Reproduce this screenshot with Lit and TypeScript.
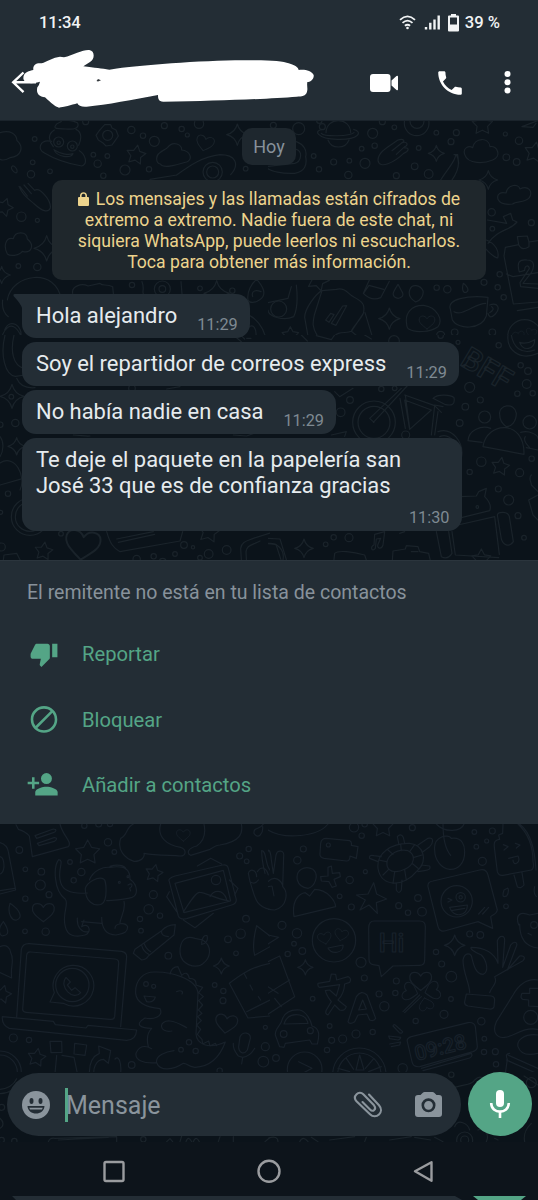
import { LitElement, html, css, svg } from "lit";
import { customElement } from "lit/decorators.js";

type Pt = [number, number, number];

interface Patch {
  x: number;
  y: number;
  h: number;
  dim?: boolean;
  dots: Pt[];
  stars?: [number, number, number, number][];
  sparks?: Pt[];
  hearts?: [number, number, number, number][];
  lines: string;
  words?: { t: string; x: number; y: number; s: number; r: number }[];
}

const starPath = (cx: number, cy: number, r: number, rot: number) => {
  let d = "";
  for (let i = 0; i < 10; i++) {
    const a = ((rot - 90 + i * 36) * Math.PI) / 180;
    const q = i % 2 ? r * 0.52 : r;
    d += `${i ? "L" : "M"}${(cx + q * Math.cos(a)).toFixed(1)} ${(cy + q * Math.sin(a)).toFixed(1)}`;
  }
  return d + "Z";
};

const sparkPath = (x: number, y: number, r: number) => {
  const k = r * 0.2;
  return `M${x} ${y - r}Q${x + k} ${y - k} ${x + r} ${y}Q${x + k} ${y + k} ${x} ${y + r}Q${x - k} ${y + k} ${x - r} ${y}Q${x - k} ${y - k} ${x} ${y - r}Z`;
};

const HEART = "M0 28C-20 12-34 2-31-13C-28-27-8-28 0-13C8-28 28-27 31-13C34 2 20 12 0 28Z";

// Wallpaper doodles, grouped by region; each region is drawn at 3 units per pixel.
const PATCHES: Patch[] = [
  {
    x: 0, y: 120, h: 215,
    dots: [[257, 5, 9], [394, 30, 11], [429, 47, 8], [463, 64, 15], [493, 17, 9], [545, 27, 8], [562, 45, 6], [597, 11, 14], [104, 57, 7], [280, 104, 7], [322, 108, 7], [293, 131, 11], [375, 150, 15], [447, 148, 8], [98, 127, 7], [150, 154, 7], [93, 163, 11], [310, 167, 8], [64, 290, 14], [112, 301, 6], [55, 438, 7], [112, 441, 11], [737, 146, 7], [638, 156, 29], [638, 156, 18], [396, 495, 8], [487, 507, 24], [487, 507, 10], [600, 505, 7], [697, 512, 8], [323, 46, 15], [176, 66, 15], [217, 78, 15], [176, 68, 5], [217, 80, 5]],
    stars: [[408, 105, 30, 10], [12, 262, 28, 20]],
    sparks: [[712, 44, 32], [140, 385, 38], [5, 465, 26], [650, 520, 38]],
    hearts: [[615, 69, 0.85, 14]],
    lines: "M0 38C30 28 50 42 51 62C72 80 65 110 30 113C18 120 8 122 0 118M183 5C183-4 218 0 232 8C240 22 225 30 198 27C180 26 160 28 166 17C170 8 180 8 183 5M163 30C140 44 148 65 160 80M228 28C247 36 244 60 236 76M155 64C118 56 112 90 132 98C165 118 200 130 245 138C265 132 256 103 238 92M162 89C180 101 204 106 219 101C212 115 170 112 162 89M314 14L332 14L336 24L348 30L355 48L346 61L336 75L318 78L308 68L295 60L288 46L297 33L304 25ZM470 117C468 94 500 90 503 82C520 60 546 75 545 90C570 92 580 117 560 126C540 130 492 150 481 132Q470 130 470 117M530 165L450 178M530 165C565 140 605 110 660 104C707 104 720 132 692 164M60 200L82 228M72 195L94 221M84 190L104 211M104 211C120 200 154 242 151 264C144 280 126 273 103 252C80 232 68 225 57 199M36 139C43 132 58 155 48 159C39 156 31 145 36 139M22 402C10 380 16 350 40 356C45 334 80 332 82 357C105 376 94 402 67 394C56 408 30 409 22 402M22 540C35 460 170 440 184 540M14 630C30 590 70 620 62 650M5 650C30 592 55 625 68 660M218 520C214 500 244 488 264 498L300 490C307 500 320 490 338 500L340 520M426 485C434 505 426 515 430 522M543 485L546 522M744 540C740 515 755 490 770 478C790 500 802 525 779 539C764 550 748 550 744 540M758 530C752 510 770 510 783 515M732 580C770 590 790 625 796 650M745 622C760 610 770 625 768 650M8 540C5 565 12 580 25 590",
  },
  {
    x: 268, y: 120, h: 215,
    dots: [[16, 16, 9], [92, 26, 18], [163, 20, 9], [154, 2, 8], [314, 40, 15], [343, 5, 9], [379, 22, 7], [320, 77, 8], [281, 86, 7], [137, 108, 7], [197, 126, 9], [244, 122, 7], [291, 130, 15], [153, 148, 8], [241, 165, 11], [385, 167, 9], [440, 139, 10], [482, 162, 13], [452, 84, 7], [505, 38, 7], [565, 38, 9], [549, 65, 9], [446, 10, 37], [447, 4, 21], [753, 62, 11], [712, 42, 6], [715, 112, 10], [746, 126, 10], [671, 277, 11], [790, 308, 9], [673, 326, 7], [648, 487, 9], [695, 463, 8], [689, 502, 8], [707, 532, 8], [506, 503, 8], [538, 508, 11], [518, 646, 12], [560, 637, 10], [673, 637, 10], [770, 650, 51], [32, 567, 24]],
    stars: [[643, 14, 32, 0], [800, 98, 32, 10], [150, 480, 34, 20], [67, 646, 26, 0]],
    sparks: [[505, 100, 24], [661, 180, 28], [364, 596, 32]],
    hearts: [[477, 606, 0.75, 0], [752, 648, 0.55, -10], [790, 638, 0.5, 10]],
    lines: "M174 38C175-10 247-10 248 38M180 60C190 88 232 88 243 60M165 28C135 30 146 57 208 58C273 60 285 35 257 28M160 40C168 50 245 50 258 38M85 65C106 73 118 90 113 110C118 135 110 155 80 160C40 162 10 153 0 146M85 88C105 95 100 125 80 130L0 139M330 121C330 95 362 80 390 60C408 54 412 65 402 68L372 92M402 68C420 63 421 77 410 80L385 103M410 84C425 82 423 93 407 100C380 126 334 150 330 121M590 103C584 84 602 75 614 83C620 52 662 50 666 80C688 75 702 110 674 120C650 130 600 135 590 103M690 238C685 220 700 215 714 219C720 192 752 190 756 207C780 195 796 213 784 233C770 250 746 242 734 252C710 255 695 250 690 238M518 180C540 145 565 120 563 104M552 180C576 145 574 120 565 104M558 104L569 104L572 130M762 20L810 2M762 20L795 22L804 10M658 300L716 310L706 290L728 280L734 300L747 306C724 334 692 325 660 370M655 360C685 372 694 396 689 414C676 412 663 397 652 385M708 408L712 382L752 374L748 350L778 348L783 366L810 362M752 374C760 390 770 388 783 380L783 366M708 408L736 552L810 546M715 462L735 470L810 458M754 456C745 425 755 418 777 420C801 420 800 440 790 458L765 490L810 492M754 456L770 451C770 435 783 434 784 446L756 488L758 500L810 505M748 572L810 562M110 592C110 565 145 520 162 512L205 508C230 500 244 525 256 530C285 545 292 555 286 580L250 634C235 642 210 630 194 654L150 650C130 620 135 605 139 585L162 512M110 592L122 660M291 578L316 660M286 580C278 600 256 618 250 634L282 660M190 610L224 558L236 557L204 616ZM173 600L188 580L198 584L183 607ZM304 480L286 520Q310 545 338 533L364 484M288 518L303 496L347 508M390 493C376 515 371 524 380 531C392 540 412 530 402 515L390 493M426 508C432 491 456 494 465 512C468 528 456 542 443 546C425 535 421 520 426 508M586 490C580 510 587 522 596 516C606 510 594 495 586 490M416 612C410 580 430 555 467 556C508 562 526 600 510 620C485 638 440 638 424 628Q416 625 416 612M547 567C535 538 600 525 660 532L655 588C640 630 570 630 553 600ZM558 575C585 590 620 550 653 550M665 555C690 546 698 565 682 582Q665 600 660 580M671 560Q682 568 665 578M85 495C90 540 87 570 77 590C45 605 0 588 0 570M70 500L60 535L0 548",
  },
  {
    x: 0, y: 335, h: 226,
    dots: [[34, 185, 7], [46, 264, 11], [1, 269, 8], [24, 476, 8], [2, 532, 6], [183, 596, 7], [525, 657, 7], [552, 630, 10], [579, 637, 5], [600, 668, 7], [626, 657, 13], [680, 645, 13], [461, 664, 8], [410, 672, 11], [488, 680, 10], [4, 636, 12], [90, 545, 56], [90, 545, 44], [396, 160, 10]],
    stars: [[131, 649, 28, 8], [627, 590, 34, 10]],
    sparks: [[36, 184, 36], [50, 334, 26]],
    hearts: [[248, 628, 1.65, 8]],
    lines: "M15 0C0 60 15 120 46 124L75 120M42 0C30 50 40 90 70 100M50 130C60 155 80 160 105 158M0 305C13 320 10 350 0 365M0 384C45 355 80 425 60 465M0 450L70 430M8 690L12 660L50 655L68 690M320 590C330 625 340 640 360 650L540 618L548 590M350 612L460 590M355 622L464 598M725 690L722 640C725 620 740 618 760 610L810 594M740 690L738 650C740 632 752 632 780 618M700 0L724 20M722 0L734 12M740 10L753 10M220 300C240 300 255 305 270 303M500 162L540 155M700 300L740 303L770 292",
  },
  {
    x: 268, y: 335, h: 226,
    dots: [[692, 31, 8], [758, 91, 8], [780, 108, 10], [776, 147, 13], [748, 176, 8], [794, 175, 8], [605, 157, 15], [592, 215, 10], [637, 195, 9], [575, 264, 10], [218, 232, 13], [246, 195, 10], [180, 190, 10], [318, 262, 64], [318, 262, 48], [640, 380, 14], [605, 411, 8], [755, 413, 12], [791, 371, 8], [691, 462, 9], [722, 495, 15], [750, 542, 9], [768, 608, 7], [197, 607, 8], [173, 628, 7], [243, 608, 12], [628, 516, 4], [785, 262, 20], [650, 246, 18], [340, 162, 8], [378, 18, 16], [413, 300, 12], [6, 665, 40], [518, 2, 8], [570, 22, 6], [380, 160, 7]],
    stars: [[697, 395, 28, 10], [640, 672, 30, 0]],
    sparks: [[108, 640, 28]],
    lines: "M316 262L420 150M318 262L305 250L400 160M396 190L412 280M412 180L425 280M410 195L490 225L425 283ZM410 180L500 212L520 232M500 212L490 300M510 230L500 300M495 190C510 175 550 180 558 188C562 210 550 213 530 208ZM500 210L525 215M510 290C550 275 590 320 580 370M515 305C548 290 580 340 570 372M695 238C690 210 740 200 745 235C745 260 730 275 715 275C700 265 695 255 695 238M645 335C655 260 770 250 768 358ZM600 317C602 285 640 270 668 280M600 317L642 322M758 292C785 285 810 300 810 310M775 338L810 345M772 305C765 315 775 328 785 338M575 485L625 483L632 470L655 460L650 485C660 495 672 510 665 527L580 548M570 570L680 545L694 658M552 590L562 660L692 668M688 540C690 530 720 528 724 545L736 620C722 640 705 628 700 612ZM505 590L520 665Q540 675 552 655L542 590M200 655C210 645 255 650 290 660L300 690M196 690L200 655M375 648L412 642L415 632L450 635L455 650L482 655L490 690M375 648L372 690M430 650L450 650M790 420C780 430 790 440 790 450L810 470M782 495L795 540L810 555M782 495L810 480M320 598L350 590L345 630C340 645 325 640 330 628L338 610L325 612L322 640C312 653 305 635 318 630ZM395 595L410 590M720 0C715 40 750 80 810 55M730 0C735 35 760 60 800 45M755 22C775 30 790 20 800 14C800 45 765 50 755 22M0 610L36 612L60 690M0 626L24 628L44 690M290 0L310 12M200 170L215 185L255 160M100 0L118 18M145 2L190 14L200 0M190 300L235 290L230 304",
    words: [{ t: "BFF", x: 572, y: 88, s: 92, r: 31 }],
  },
  {
    x: 0, y: 820, h: 252, dim: true,
    dots: [[253, 17, 8], [296, 12, 9], [330, 12, 8], [58, 90, 10], [324, 67, 11], [343, 96, 7], [210, 126, 7], [76, 148, 7], [124, 155, 10], [244, 156, 11], [221, 181, 8], [121, 195, 15], [147, 224, 9], [76, 236, 8], [75, 334, 7], [137, 335, 11], [460, 224, 12], [446, 268, 14], [420, 297, 8], [480, 287, 8], [423, 332, 7], [505, 407, 10], [746, 87, 8], [719, 108, 9], [740, 124, 7], [738, 296, 10], [722, 341, 14], [684, 358, 10], [708, 400, 7], [644, 495, 7], [670, 513, 8], [669, 542, 9], [796, 680, 12], [790, 725, 16], [395, 735, 10], [40, 654, 12], [87, 660, 8], [659, 752, 8], [543, 689, 7], [567, 667, 8], [587, 693, 8], [438, 492, 7], [461, 499, 6], [648, 180, 14], [217, 495, 50], [0, 757, 64], [0, 757, 52], [796, 622, 6], [358, 187, 3], [384, 170, 3]],
    stars: [[263, 98, 38, 0], [462, 160, 27, 12], [7, 523, 28, 15], [110, 713, 28, 10]],
    sparks: [[664, 438, 24]],
    hearts: [[130, 276, 1.05, 0], [550, 45, 0.65, 0], [679, 610, 1.05, 8]],
    lines: "M48 14L55 28Q78 35 88 48L97 110L205 80C218 65 188 48 180 12M105 47L160 27C172 27 168 36 160 38L110 55ZM112 70L162 53C174 52 170 61 163 64L117 77ZM0 68Q22 75 25 95L47 210L0 222M0 212L44 205M0 110Q12 112 12 140Q10 160 0 162M400 12C375 25 385 45 362 55C350 90 375 115 402 124C425 125 435 110 432 100C470 108 520 105 540 108C560 108 560 88 542 82C500 75 470 50 482 12M612 12C620 50 605 68 590 78C562 85 560 100 572 106L630 88C645 78 655 75 660 75C720 65 730 40 724 12M176 119C160 140 160 210 196 238C208 250 185 282 196 320C202 350 230 352 255 345C275 340 270 305 245 320L252 300M176 119C195 120 170 150 182 188C190 215 225 222 262 219M268 180C280 150 310 140 330 142C378 135 390 150 390 178C414 195 415 225 396 232C370 240 345 240 320 242M256 205C255 242 280 262 305 252C325 240 318 180 312 178C295 165 260 190 256 205M330 139C350 132 375 135 378 148M384 195C400 185 398 200 389 205L392 213M372 244C378 270 362 290 360 308M307 250L305 252M305 292C305 320 315 345 348 345C370 340 382 340 383 320C375 305 345 310 345 325M245 305L304 310M232 294C230 320 245 340 265 335M508 185Q502 175 525 168L668 135Q682 132 685 145L708 235Q712 250 695 255L560 296Q540 300 535 288ZM525 190L670 151L692 243L552 278ZM550 276C570 245 588 215 600 217C620 218 640 235 688 243M630 230C640 210 668 205 680 238M592 138L632 115L665 132M508 215L500 230L530 275M688 180L714 205L704 225M550 300L585 323L640 280M400 400L425 420Q440 418 445 408L522 345L526 314Q500 315 485 332L405 388ZM425 376Q430 395 446 403M432 370Q440 390 452 395M485 332Q482 348 505 350M540 395C540 360 558 345 585 355L608 360C640 380 630 415 610 430C600 440 575 445 550 423Q540 410 540 395M605 370C605 350 615 345 621 347C625 360 618 372 605 373M30 250C20 285 38 303 50 300C70 292 60 270 30 250M10 305C-10 330 0 350 10 347C32 345 22 322 10 305M0 380C20 370 30 385 32 398C45 420 30 440 35 474L0 458M50 590L64 388Q68 370 88 371L365 394Q380 397 380 410L362 620M68 568L80 405Q82 395 92 396L345 417Q357 418 356 430L344 590Q342 600 330 598L78 577Q68 576 68 568M7 590L160 604L166 614L258 624L264 616L410 630Q408 660 380 661L28 625Q5 615 7 590ZM163 518A61 61 0 1 1 190 550L150 546ZM198 472C175 500 220 545 242 518L225 503L215 511L202 495L211 486ZM407 520C405 480 430 455 465 456C510 455 590 475 594 520L588 642C590 672 625 690 676 666C660 710 630 740 585 742C560 740 565 730 550 730C520 750 480 755 470 728C430 732 405 720 408 700C420 670 445 680 455 686M407 520C410 550 440 562 480 566C492 590 460 600 435 594C400 615 425 625 455 625C440 640 440 660 445 680M432 528L466 531Q460 550 440 545ZM510 462Q515 440 534 440L545 466Q562 450 568 475Q590 475 588 495L608 502L596 518L610 530L596 542L608 555L595 570L606 580L593 590L604 602L590 615L602 628L592 643L606 658L608 672L626 663L630 678L646 670L650 677M530 515C545 508 550 516 546 522M516 633C475 640 475 600 510 603C530 605 545 615 560 623M470 728C465 705 500 695 522 692M790 12C780 30 760 20 762 40C775 60 790 40 788 20M810 150C795 135 800 90 785 92C785 120 792 148 795 160M745 160C748 145 770 148 770 170M745 160L750 185Q765 195 775 180M772 155C785 135 800 145 805 165M750 185C765 230 765 260 810 268M770 317Q755 375 764 406L810 380M770 317L810 348M688 490C720 465 755 440 810 430M688 490L744 594L810 588M740 575L810 540M732 460L740 475M750 495L758 510M775 530L782 540M720 650C730 632 752 638 751 655L742 690C730 708 715 695 716 680ZM700 670C698 690 710 700 715 708L728 712C750 710 758 695 764 685M728 712L725 732M150 664L185 664L186 697L153 698ZM224 670L260 675L255 706L222 702ZM186 706L222 712L232 760M170 706L165 760M296 678L332 692L325 730L310 718C285 720 280 750 282 760M296 678L298 700C270 712 268 740 268 760M345 717C355 705 365 725 362 760",
  },
  {
    x: 268, y: 820, h: 252, dim: true,
    dots: [[258, 22, 14], [281, 47, 8], [290, 13, 8], [433, 23, 9], [106, 87, 9], [88, 121, 11], [292, 155, 6], [245, 180, 11], [215, 229, 7], [250, 261, 9], [42, 316, 12], [87, 340, 14], [78, 371, 7], [103, 393, 10], [59, 402, 8], [279, 427, 15], [289, 474, 9], [134, 536, 7], [185, 618, 7], [191, 661, 9], [224, 657, 12], [264, 642, 12], [314, 636, 8], [177, 690, 8], [24, 714, 10], [619, 36, 7], [673, 33, 9], [656, 63, 6], [625, 80, 7], [643, 124, 12], [714, 259, 7], [450, 234, 10], [392, 257, 9], [420, 278, 8], [462, 275, 13], [605, 342, 9], [637, 345, 10], [504, 396, 8], [521, 432, 9], [550, 470, 16], [385, 483, 9], [382, 519, 8], [333, 522, 9], [349, 559, 14], [549, 537, 7], [528, 583, 12], [443, 603, 8], [640, 604, 11], [649, 656, 7], [648, 696, 8], [682, 695, 9], [684, 733, 8], [404, 745, 14], [198, 361, 65], [566, 244, 47], [578, 232, 14], [578, 232, 5], [788, 592, 21], [47, 642, 10], [127, 632, 9], [110, 748, 52], [274, 764, 80], [274, 764, 65], [181, 75, 6], [798, 315, 10]],
    stars: [[345, 20, 34, 0]],
    sparks: [[112, 442, 23], [560, 376, 31]],
    hearts: [[170, 354, 0.65, -12], [220, 344, 0.65, 12], [458, 482, 1.05, 0], [494, 512, 0.85, 75], [426, 515, 0.85, -75], [474, 553, 0.7, 165]],
    lines: "M0 30C50 60 150 50 180 12M158 70Q160 55 175 55L245 62Q252 65 250 76L270 80L265 115L246 108Q246 124 235 123L168 115Q154 112 156 100ZM16 160L10 120C8 90 0 85 0 95M16 160L24 105C28 88 50 90 47 108L44 200C60 215 60 260 20 270L0 268M0 185C20 165 40 180 45 200M0 200L12 198L18 228M88 180C82 150 110 135 135 148C155 165 140 200 120 205C105 203 92 195 88 180M78 290C70 240 95 220 112 218L125 228L140 208C180 208 202 245 203 260ZM180 142L190 138L193 160L215 158L217 170L198 178L205 198L192 202L183 185L160 183L158 170L180 168ZM317 188L326 222L356 237L325 248L328 280L303 255L276 270L292 240L265 225L300 222ZM330 145C325 100 370 68 425 70C470 75 480 125 445 155C410 200 340 205 330 145M358 140C350 110 385 85 420 92C445 105 440 135 410 148C390 158 365 158 358 140M332 120L355 125M345 165L362 148M375 190L380 155M415 180L410 150M450 145L432 130M462 105L438 112M440 74L425 95M398 72L400 92M360 90L375 103M392 70L388 50Q398 38 406 52L410 70M450 75L480 55C500 50 495 70 485 80L465 95M460 135L485 138Q490 150 470 152L450 155M402 180L400 210Q393 225 385 210L385 190M330 125L305 115Q302 103 318 107L340 110M500 90C495 50 540 40 550 55C585 50 590 80 590 95C590 130 570 150 545 148C520 145 500 120 500 90M548 106C530 85 525 40 525 12M505 12C530 40 580 35 588 12M705 12L704 40L692 45L695 58C675 60 678 75 680 90L688 155Q692 168 705 166L790 150Q800 145 795 125C795 80 780 40 750 12M755 12C790 40 800 90 804 150M706 74L720 80L708 90M742 70L756 75L745 84M722 115L750 108C760 130 735 140 735 120M738 165L748 200Q758 208 768 195L762 158M480 200Q478 185 495 183L635 150Q655 145 660 165L688 270C685 285 670 285 668 290L674 325L630 305L540 330Q515 340 510 320ZM540 235L552 240L540 246M545 262L598 255C600 290 555 295 545 262M550 272L590 265M632 282L650 262M644 282L662 262M708 210C700 235 710 230 716 228C725 215 720 200 718 205ZM752 315C740 280 760 275 785 285L810 280M755 312C755 350 770 380 810 384M780 340L790 345M800 200Q795 220 805 230M302 325Q302 302 320 303L455 303Q472 303 472 320L470 420Q470 436 455 436L375 438L340 470L333 437L315 434Q303 432 303 418ZM180 384L225 375C228 400 190 405 180 384M0 345L32 352L0 372M0 425L35 408L80 530L0 583M0 520L65 480M20 535L40 560M0 500L30 520M150 490L185 484L190 462L203 463L206 480L240 470Q252 475 245 487L230 492C228 520 215 535 210 540L235 560Q230 575 215 570L200 555L180 585Q170 582 175 570L190 545C178 530 175 525 172 512L185 510L205 528L215 494L155 502Q148 500 150 490M240 605L265 530Q280 508 297 525L323 595Q318 605 305 600L297 582L270 585L260 605Q245 615 240 605M272 570L284 540L295 567ZM455 525L405 575M460 530L410 578M585 420C590 395 610 398 612 415C618 440 625 462 645 463C665 455 655 420 640 405C615 395 605 385 610 382C650 382 680 400 690 430L688 362C695 345 710 345 710 360L704 442L728 375C740 360 752 368 744 382L718 450L755 408C770 405 772 415 765 422L680 470C690 490 670 500 665 518M585 420C585 460 605 490 605 518M595 522L670 528Q680 530 680 540L678 560Q675 568 665 567L600 558Q588 555 590 545ZM810 480C780 475 755 490 735 525L685 605C670 640 690 655 710 652C740 650 760 620 810 628M810 505L785 505L785 520L762 520Q755 535 765 538L782 540L782 558L810 560M810 645C770 640 745 660 750 680C760 710 790 705 810 700M720 705L810 745M715 720L810 762M725 700Q710 700 718 718L712 760M22 645C20 625 40 615 42 600C50 575 70 568 95 570C115 575 128 600 132 618C155 625 155 645 148 672L132 672L125 660L52 670L48 682L35 680ZM48 612C55 588 75 582 95 585C110 588 118 600 120 610ZM92 725L132 745L100 762M375 618Q378 610 385 618L404 635Q402 642 394 638ZM362 648L398 652Q398 658 390 660L365 656ZM365 672L398 666L395 675L370 680M418 665Q415 655 430 650L600 608Q618 605 622 620L628 680Q628 690 615 695L455 740Q435 742 432 725ZM460 745L610 700Q615 708 605 714L465 752M275 705L288 750L264 750ZM235 715L257 748M318 715L292 745M210 745L245 755M340 740L302 755",
    words: [
      { t: "Hi", x: 332, y: 395, s: 80, r: 0 },
      { t: "09:28", x: 446, y: 722, s: 62, r: -14 },
    ],
  },
  {
    x: 0, y: 1060, h: 82,
    dots: [[5, 142, 9], [5, 240, 8], [430, 238, 8], [43, 243, 8]],
    lines: "M0 175C12 185 12 198 0 205M0 101Q45 98 62 62M0 88Q36 84 50 56M145 245Q150 232 165 235L350 230L350 245M175 240L325 232M500 245L510 236L518 245M540 245L545 228M558 245Q565 225 575 245M580 245Q588 225 598 245M655 245L660 230M700 245L700 230M795 245L810 232",
  },
  {
    x: 268, y: 1060, h: 82,
    dots: [[590, 240, 24], [590, 240, 12], [790, 68, 15], [550, 44, 8]],
    lines: "M0 235Q30 225 30 245M95 245Q105 225 120 245M130 232L150 245M185 240L260 230M290 245L295 232M365 240L430 230M440 232L488 240M500 232L525 245M545 90C575 70 610 80 620 60C640 40 655 60 650 80M560 200C570 175 600 190 605 210M630 210C650 200 665 225 655 245M680 235L690 240M770 245C765 220 775 205 790 190M768 48L810 75",
  },
];

@customElement("chat-wallpaper")
class ChatWallpaper extends LitElement {
  static styles = css`
    :host { display: block; }
    .sheet { display: block; width: 538px; height: 1200px; }
    .ink { fill: none; stroke: #1a232a; stroke-width: 3.6; stroke-linejoin: round; stroke-linecap: round; }
    .dim { stroke: #18212a; }
    .word { font-family: Roboto, sans-serif; font-weight: 500; }
  `;
  render() {
    return html`<svg class="sheet" viewBox="0 0 538 1200" aria-hidden="true">
      ${PATCHES.map(
        (p) => svg`<svg x=${p.x} y=${p.y} width="270" height=${p.h} viewBox="0 0 810 ${p.h * 3}">
          <g class="ink ${p.dim ? "dim" : ""}">
            <path d=${p.lines} />
            ${p.dots.map(([x, y, r]) => svg`<circle cx=${x} cy=${y} r=${r} />`)}
            ${(p.stars ?? []).map(([x, y, r, a]) => svg`<path d=${starPath(x, y, r, a)} />`)}
            ${(p.sparks ?? []).map(([x, y, r]) => svg`<path d=${sparkPath(x, y, r)} />`)}
            ${(p.hearts ?? []).map(([x, y, k, a]) => svg`<path d=${HEART} transform="translate(${x} ${y}) rotate(${a}) scale(${k})" />`)}
            ${(p.words ?? []).map((w) => svg`<text class="word" font-size=${w.s} transform="translate(${w.x} ${w.y}) rotate(${w.r})">${w.t}</text>`)}
          </g>
        </svg>`,
      )}
    </svg>`;
  }
}

const MESSAGES = [
  { text: "Hola alejandro", time: "11:29", first: true },
  { text: "Soy el repartidor de correos express", time: "11:29" },
  { text: "No había nadie en casa", time: "11:29" },
  { text: "Te deje el paquete en la papelería san José 33 que es de confianza gracias", time: "11:30", tall: true },
];

const ACTIONS = [
  {
    label: "Reportar",
    icon: svg`<path d="M19 3.2v11.600h4.500V3.200zM15 3.200H6c-.83 0-1.540.5-1.840 1.220L.64 11.500c-.09.23-.14.47-.14.73v1.900c0 1.100.9 2 2 2h6.800l-.95 4.600-.03.3c0 .4.17.8.44 1.060L9.800 23.200l6.600-6.600c.37-.36.6-.86.6-1.400V5.200c0-1.100-.9-2-2-2z"/>`,
  },
  {
    label: "Bloquear",
    icon: svg`<path d="M12 .1C5.700.1.600 5.200.600 11.500S5.700 22.900 12 22.900 23.400 17.800 23.400 11.500 18.300.1 12 .1zM2.800 11.500c0-5.100 4.100-9.200 9.200-9.200 2.100 0 4.100.7 5.700 1.950L4.750 17.200A9.100 9.100 0 0 1 2.800 11.500zM12 20.700c-2.100 0-4.100-.7-5.700-1.950L19.250 5.800A9.100 9.100 0 0 1 21.200 11.500c0 5.100-4.100 9.200-9.200 9.200z"/>`,
  },
  {
    label: "Añadir a contactos",
    icon: svg`<path d="M14.100 11.200a4.700 4.700 0 1 0 0-9.400 4.700 4.700 0 0 0 0 9.400zM3.900 9.200V5.300H1.700V9.200H-2v2.200h3.700v3.900h2.200v-3.900h3.900V9.200zM14.100 13.400c-3.200 0-9.600 1.600-9.600 4.700v2.900H23.700v-2.900c0-3.100-6.400-4.700-9.600-4.700z"/>`,
  },
];

@customElement("app-root")
class AppRoot extends LitElement {
  static styles = css`
    :host {
      display: block; position: relative; width: 538px; height: 1200px; overflow: hidden;
      background: #0b131a; color: #e6ebee; font-family: Roboto, sans-serif;
    }
    * { box-sizing: border-box; }
    svg { display: block; overflow: visible; flex: none; }
    .wall { position: absolute; left: 0; top: 0; }
    .screen { position: relative; height: 1200px; display: flex; flex-direction: column; }
    header { height: 121px; background: #232d35; flex: none; border-bottom: 1px solid #1a232b; }
    .status { height: 45px; display: flex; align-items: center; padding: 0 38px 0 39px; font-size: 16.6px; font-weight: 500; color: #f1f3f4; }
    .status .clock { margin-right: auto; letter-spacing: -.1px; }
    .status .icons { display: flex; margin-right: 4px; }
    .bar { height: 75px; display: flex; align-items: center; fill: #fff; }
    .title { width: 370px; height: 75px; }
    .buttons { width: 168px; height: 75px; }
    main { height: 439px; flex: none; display: flex; flex-direction: column; align-items: flex-start; padding: 7px 22px 0; }
    .day { align-self: center; width: 54px; height: 37px; border-radius: 10px; background: #1e272e; color: #87919a; font-size: 18px; line-height: 37px; text-align: center; }
    .notice {
      align-self: center; width: 434px; height: 100px; margin-top: 15px; padding: 9px 0; border-radius: 10px; background: #1f272c;
      color: #edd48d; font-size: 17.600px; line-height: 20.900px; text-align: center;
    }
    .notice div { white-space: nowrap; }
    .notice svg { display: inline-block; width: 11px; height: 14px; margin-right: 7px; vertical-align: -1px; }
    .thread { margin-top: 14px; display: flex; flex-direction: column; align-items: flex-start; gap: 3.900px; }
    .bubble { position: relative; display: flex; align-items: flex-end; height: 44px; padding: 0 12px 0 14px; gap: 20px; border-radius: 14px; background: #232d35; }
    .bubble p { margin: 0; font-size: 21.950px; line-height: 26px; padding-bottom: 9px; white-space: nowrap; }
    .bubble time { font-size: 16.300px; line-height: 20px; color: #7f8a92; padding-bottom: 3px; }
    .bubble.tall { width: 439.500px; height: 93.500px; align-items: stretch; padding-top: 9px; gap: 0; }
    .tall p { width: 372px; white-space: normal; padding: 0; flex: none; }
    .tall time { align-self: flex-end; margin-left: auto; }
    .tail { position: absolute; left: -9px; top: 0; fill: #232d35; }
    .panel { height: 264px; flex: none; background: #232d35; border-top: 1px solid #2b353d; padding: 20px 27px 0; }
    .panel h2 { margin: 0; font-size: 19.520px; line-height: 24px; font-weight: 400; color: #88929b; }
    .action { display: flex; align-items: center; height: 65.700px; font-size: 20.200px; color: #54a586; gap: 24px; }
    .actions { padding-top: 16px; }
    .action svg { width: 28px; height: 28px; margin-left: 3px; fill: #54a586; }
    .gap { height: 248px; flex: none; }
    .composer { height: 70px; flex: none; display: flex; padding: 0 6px 0 7px; gap: 7px; align-items: flex-start; }
    .field { display: flex; align-items: center; width: 454px; height: 63px; margin-top: 1px; border-radius: 32px; background: #232d35; padding: 0 19px 0 15px; }
    .caret { width: 3px; height: 34px; margin-left: 15px; background: #54a586; }
    .hint { font-size: 25px; line-height: 34px; color: #8a949c; margin-left: -2px; margin-right: auto; padding-top: 3px; }
    .clip { margin-right: 33px; }
    .mic { width: 64px; height: 64px; border-radius: 50%; background: #54a586; flex: none; }
    nav { flex: 1; background: #0d141b; overflow: hidden; }
  `;

  render() {
    return html`
      <chat-wallpaper class="wall"></chat-wallpaper>
      <div class="screen">
        <header>
          <div class="status">
            <span class="clock">11:34</span>
            <svg class="icons" width="62" height="18" viewBox="0 0 62 18" fill="none" stroke="#f1f3f4" stroke-width="1.8">
              <path d="M1 5.800Q8.500-1 16 5.800M3.500 8.900Q8.500 4.400 13.500 8.900M5.900 11.800Q8.500 9.600 11.100 11.800"/>
              <circle cx="8.500" cy="14" r="1.300" fill="#f1f3f4" stroke="none"/>
              <path stroke-width="2.400" d="M27 15.500v-2.500M31.300 15.500V8.700M35.500 15.500V5.500M39.700 15.500V1.500"/>
              <path fill="#f1f3f4" stroke="none" fill-rule="evenodd" d="M52 0h5v1.500h2q1 0 1 1v14q0 1-1 1h-9q-1 0-1-1v-14q0-1 1-1h2zM51 3.500v7h7v-7z"/>
            </svg>
            <span>39 %</span>
          </div>
          <div class="bar">
            <svg class="title" viewBox="0 0 370 75">
              <path d="M23.500 27.500L13.200 37.300L23.500 47.200M13.200 37.300H36" fill="none" stroke="#fff" stroke-width="2.400"/>
              <path transform="translate(0 -45) scale(.33333)" d="M70 235C70 215 90 212 100 210C98 195 108 188 125 190C140 185 160 172 180 170L192 172C220 165 250 148 268 150C285 152 285 178 270 186L250 199C285 203 305 206 328 209C420 195 600 182 730 181C800 179 850 183 866 190C885 195 895 203 896 210C910 207 935 210 941 225C943 238 930 246 922 246C920 260 924 265 921 275C918 288 905 289 890 290C800 297 650 303 490 305C475 305 474 295 474 285C400 298 320 315 260 320C245 321 235 318 232 310C215 315 190 322 177 323C165 320 155 310 135 292C115 290 108 278 112 262C118 255 118 250 120 245C105 250 72 255 70 235Z"/>
              <path d="M96.500 36L98 34L101 35.200L98 36.500z" fill="#34393d"/>
            </svg>
            <svg class="buttons" viewBox="370 0 168 75">
              <rect x="370" y="29" width="20.500" height="18" rx="3"/>
              <path d="M391.500 35.500L396.500 31q1.500-1 1.500.8v12.400q0 1.800-1.500.8l-5-4.500z"/>
              <path transform="translate(434.300 22.300) scale(1.310)" d="M4 3C3.450 3 3 3.450 3 4C3 13.390 10.610 21 20 21C20.550 21 21 20.550 21 20V16.500C21 15.950 20.550 15.500 20 15.500C18.750 15.500 17.550 15.300 16.430 14.930C16.080 14.820 15.690 14.900 15.410 15.170L13.210 17.370C10.380 15.930 8.060 13.620 6.620 10.780L8.820 8.570C9.100 8.310 9.180 7.920 9.070 7.570C8.700 6.450 8.500 5.250 8.500 4C8.500 3.450 8.050 3 7.500 3Z"/>
              <circle cx="507.500" cy="29" r="3"/><circle cx="507.500" cy="37.300" r="3"/><circle cx="507.500" cy="45.600" r="3"/>
            </svg>
          </div>
        </header>
        <main>
          <div class="day">Hoy</div>
          <div class="notice">
            <div><svg viewBox="0 0 11 14"><path fill="#edd48d" fill-rule="evenodd" d="M1 5H2V3.500C2-1 9-1 9 3.500V5h1q1 0 1 1v7q0 1-1 1H1q-1 0-1-1V6q0-1 1-1zM3.600 5h3.800V3.500c0-2.400-3.800-2.400-3.800 0z"/></svg>Los mensajes y las llamadas están cifrados de</div>
            <div>extremo a extremo. Nadie fuera de este chat, ni</div>
            <div>siquiera WhatsApp, puede leerlos ni escucharlos.</div>
            <div>Toca para obtener más información.</div>
          </div>
          <div class="thread">
            ${MESSAGES.map(
              (m) => html`<div class="bubble ${m.tall ? "tall" : ""}">
                ${m.first ? html`<svg class="tail" width="24" height="24" viewBox="0 0 24 24"><path d="M1.500 0H24V18H9V14Q8 10 .5 2Q0 0 1.500 0z"/></svg>` : ""}
                <p>${m.text}</p><time>${m.time}</time>
              </div>`,
            )}
          </div>
        </main>
        <section class="panel">
          <h2>El remitente no está en tu lista de contactos</h2>
          <div class="actions">
            ${ACTIONS.map((a) => html`<div class="action"><svg viewBox="0 0 24 24">${a.icon}</svg><span>${a.label}</span></div>`)}
          </div>
        </section>
        <div class="gap"></div>
        <div class="composer">
          <div class="field">
            <svg width="28" height="28" viewBox="0 0 28 28">
              <circle cx="14" cy="14" r="14" fill="#8a949c"/>
              <ellipse cx="9.500" cy="10" rx="2" ry="2.900" fill="#232d35"/><ellipse cx="18.500" cy="10" rx="2" ry="2.900" fill="#232d35"/>
              <path d="M5.500 15H22.500C22 25 6 25 5.500 15z" fill="#232d35"/><path d="M7.300 16.700H20.700L20 18.600H8z" fill="#8a949c"/>
            </svg>
            <div class="caret"></div>
            <div class="hint">Mensaje</div>
            <svg class="clip" width="28" height="28" viewBox="0 0 28 28" fill="none" stroke="#8a949c" stroke-width="2.100" stroke-linecap="round">
              <path d="M15 3.500L25 14.200C31 21 22 29 16 23.200L2.500 10.300C-2 5 5 -1 9.300 3.200L20 14.300C23 18 19 21.500 16 18.500L8.500 11"/>
            </svg>
            <svg width="27" height="26" viewBox="0 0 27 26">
              <path fill="#8a949c" fill-rule="evenodd" d="M9.500 0h8q1 0 1.700.7L21.500 3H24q3 0 3 3v16q0 3-3 3H3q-3 0-3-3V6q0-3 3-3h2.500L7.800.7Q8.500 0 9.500 0zM13.500 6.300a7 7 0 1 0 0 14 7 7 0 0 0 0-14zM13.500 8.900a4.400 4.400 0 1 1 0 8.800 4.400 4.400 0 0 1 0-8.800z"/>
            </svg>
          </div>
          <svg class="mic" viewBox="0 0 64 64">
            <rect x="28" y="18" width="8" height="17" rx="4" fill="#fff"/>
            <path d="M23.200 31C23.200 42.500 40.800 42.500 40.800 31M32 40V46" fill="none" stroke="#fff" stroke-width="2.600"/>
          </svg>
        </div>
        <nav>
          <svg width="538" height="58" viewBox="0 1142 538 58" fill="none" stroke="#9a9c9f" stroke-width="2.400">
            <rect x="104.500" y="1162" width="19" height="19" rx="1.500"/>
            <circle cx="269" cy="1171.300" r="10.500"/>
            <path stroke-linejoin="round" d="M415 1171.300L431.500 1162.200V1180.800z"/>
            <path stroke="none" fill="#232d35" d="M12 1196H455L462 1200H16z"/>
            <path stroke="none" fill="#54a586" d="M473 1196H526L521 1200H478z"/>
          </svg>
        </nav>
      </div>`;
  }
}
